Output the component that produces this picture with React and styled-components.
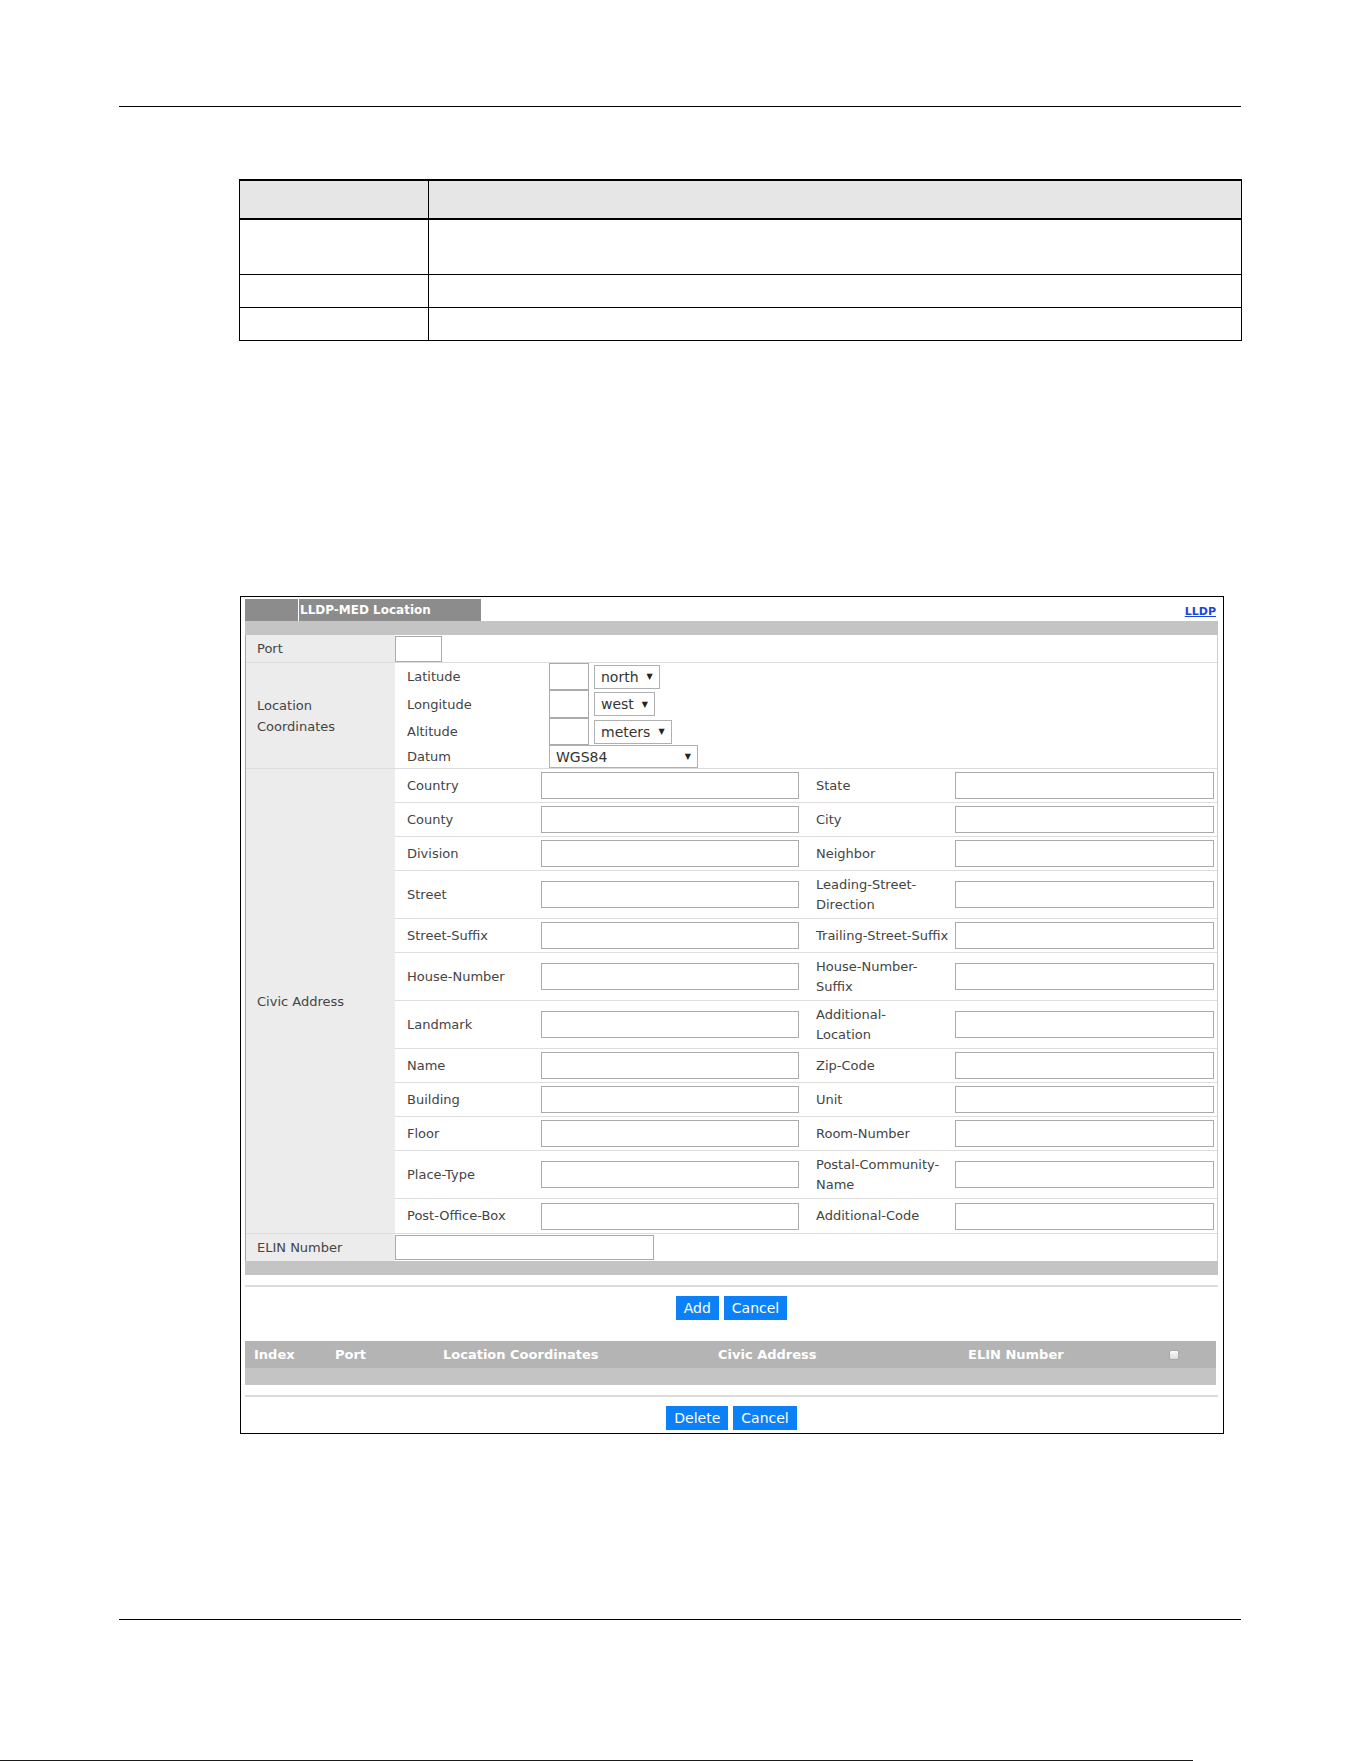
import React from 'react';
import styled, { createGlobalStyle } from 'styled-components';

const GlobalStyle = createGlobalStyle`
  html, body {
    margin: 0;
    padding: 0;
    background: #fff;
  }
  body {
    font-family: "DejaVu Sans", "Liberation Sans", sans-serif;
    color: #444;
  }
`;

const civicRows = [
  ['Country', 'State'],
  ['County', 'City'],
  ['Division', 'Neighbor'],
  ['Street', 'Leading-Street-\nDirection'],
  ['Street-Suffix', 'Trailing-Street-Suffix'],
  ['House-Number', 'House-Number-\nSuffix'],
  ['Landmark', 'Additional-\nLocation'],
  ['Name', 'Zip-Code'],
  ['Building', 'Unit'],
  ['Floor', 'Room-Number'],
  ['Place-Type', 'Postal-Community-\nName'],
  ['Post-Office-Box', 'Additional-Code'],
];

const coordRows = [
  { label: 'Latitude', unit: 'north' },
  { label: 'Longitude', unit: 'west' },
  { label: 'Altitude', unit: 'meters' },
];

const listColumns = ['Index', 'Port', 'Location Coordinates', 'Civic Address', 'ELIN Number'];

function App() {
  return (
    <Page>
      <GlobalStyle />
      <Rule $top={106} />

      <DocTable>
        <DocRow $head $h={37}><DocCell /><div /></DocRow>
        <DocRow $h={54}><DocCell /><div /></DocRow>
        <DocRow $h={32}><DocCell /><div /></DocRow>
        <DocRow $h={32} $last><DocCell /><div /></DocRow>
      </DocTable>

      <Frame>
        <TitleBar>
          <Tab>
            <TabEdge />
            <span>LLDP-MED Location</span>
          </Tab>
          <NavLink href="#">LLDP</NavLink>
        </TitleBar>
        <GrayBar />

        <Form>
          <Row $h={28}>
            <LabelCell>Port</LabelCell>
            <div>
              <TextBox readOnly $w={47} $h={26} style={{ marginTop: 1 }} />
            </div>
          </Row>

          <Row $h={106}>
            <LabelCell>Location<br />Coordinates</LabelCell>
            <CoordGrid>
              {coordRows.map(r => (
                <React.Fragment key={r.label}>
                  <SubLabel>{r.label}</SubLabel>
                  <TextBox readOnly $w={40} $h={r.label === 'Longitude' ? 28 : 27} />
                  <SelectCell>
                    <Select>
                      {r.unit}
                      <Arrow>▼</Arrow>
                    </Select>
                  </SelectCell>
                </React.Fragment>
              ))}
              <SubLabel>Datum</SubLabel>
              <DatumCell>
                <Select $w={149} $h={23}>
                  WGS84
                  <Arrow>▼</Arrow>
                </Select>
              </DatumCell>
            </CoordGrid>
          </Row>

          <Row>
            <LabelCell>Civic Address</LabelCell>
            <CivicList>
              {civicRows.map(([left, right]) => (
                <CivicLine key={left}>
                  <FieldLabel $indent={12}>{left}</FieldLabel>
                  <TextBox readOnly $h={27} />
                  <FieldLabel $indent={17}>{right}</FieldLabel>
                  <TextBox readOnly $h={27} />
                </CivicLine>
              ))}
            </CivicList>
          </Row>

          <Row $h={27} $flat>
            <LabelCell>ELIN Number</LabelCell>
            <div>
              <TextBox readOnly $w={259} $h={25} style={{ marginTop: 1 }} />
            </div>
          </Row>
        </Form>
        <GrayBar />

        <Divider />
        <ButtonRow>
          <Button>Add</Button>
          <Button>Cancel</Button>
        </ButtonRow>

        <ListTable>
          <ListHead>
            {listColumns.map(c => <HeadCell key={c}>{c}</HeadCell>)}
            <HeadCell><CheckBox /></HeadCell>
          </ListHead>
          <ListBody />
        </ListTable>

        <Divider />
        <ButtonRow>
          <Button>Delete</Button>
          <Button>Cancel</Button>
        </ButtonRow>
      </Frame>

      <Rule $top={185} />
      <PageEdge />
    </Page>
  );
}

export default App;

const Page = styled.div`
  width: 1361px;
  height: 1761px;
  display: flex;
  flex-direction: column;
  overflow: hidden;
`;

const Rule = styled.div`
  flex-shrink: 0;
  margin: ${p => p.$top}px 0 0 119px;
  width: 1122px;
  height: 1px;
  background: #000;
`;

const PageEdge = styled.div`
  flex-shrink: 0;
  margin-top: 140px;
  width: 1193px;
  height: 1px;
  background: #1a1a1a;
`;

/* empty description table at the top of the page */
const DocTable = styled.div`
  flex-shrink: 0;
  box-sizing: border-box;
  margin: 72px 0 0 239px;
  width: 1003px;
  border: 1px solid #000;
  border-top-width: 2px;
`;

const DocRow = styled.div`
  display: grid;
  grid-template-columns: 189px 1fr;
  height: ${p => p.$h}px;
  background: ${p => (p.$head ? '#e6e6e6' : '#fff')};
  border-bottom: ${p => (p.$last ? 'none' : `${p.$head ? 2 : 1}px solid #000`)};
`;

const DocCell = styled.div`
  border-right: 1px solid #000;
`;

/* the LLDP-MED Location screen */
const Frame = styled.div`
  flex-shrink: 0;
  box-sizing: border-box;
  margin: 255px 0 0 240px;
  width: 984px;
  height: 838px;
  padding: 2px 5px 0 4px;
  border: 1px solid #000;
  display: flex;
  flex-direction: column;
`;

const TitleBar = styled.div`
  display: flex;
  justify-content: space-between;
  height: 22px;
`;

const Tab = styled.div`
  display: flex;
  align-items: center;
  width: 236px;
  background: #8c8c8c;
  color: #fff;
  font-size: 12px;
  font-weight: 700;

  span {
    padding-left: 1px;
  }
`;

const TabEdge = styled.div`
  width: 53px;
  height: 100%;
  border-right: 1px solid #fff;
`;

const NavLink = styled.a`
  align-self: center;
  margin: 3px 2px 0 0;
  color: #1946d8;
  font-size: 11px;
  font-weight: 700;
  text-decoration: underline;
`;

const GrayBar = styled.div`
  height: 14px;
  background: #c4c4c4;
`;

const Form = styled.div`
  border-left: 1px solid #a4a4a4;
  border-right: 1px solid #cfcfcf;
`;

const Row = styled.div`
  box-sizing: border-box;
  display: grid;
  grid-template-columns: 149px 1fr;
  height: ${p => (p.$h ? `${p.$h}px` : 'auto')};
  border-bottom: ${p => (p.$flat ? 'none' : '1px solid #dcdcdc')};
`;

const LabelCell = styled.div`
  display: flex;
  align-items: center;
  padding-left: 11px;
  background: #ececec;
  font-size: 13px;
  line-height: 21px;
  color: #444;
`;

const TextBox = styled.input`
  display: block;
  box-sizing: border-box;
  width: ${p => (p.$w ? `${p.$w}px` : '100%')};
  height: ${p => p.$h}px;
  margin: 0;
  padding: 0;
  border: 1px solid #ababab;
  background: #fff;
  align-self: center;
  outline: none;
`;

const CoordGrid = styled.div`
  display: grid;
  grid-template-columns: 149px 40px auto;
  grid-template-rows: 27px 28px 27px 23px;
  column-gap: 5px;
`;

const SubLabel = styled.div`
  display: flex;
  align-items: center;
  padding-left: 12px;
  font-size: 13px;
  color: #444;
`;

const SelectCell = styled.div`
  display: flex;
  align-items: center;
`;

const DatumCell = styled.div`
  grid-column: 2 / 4;
  display: flex;
  align-items: center;
`;

const Select = styled.div`
  box-sizing: border-box;
  display: flex;
  align-items: center;
  justify-content: space-between;
  gap: 8px;
  width: ${p => (p.$w ? `${p.$w}px` : 'auto')};
  height: ${p => p.$h || 24}px;
  padding: 0 6px;
  border: 1px solid #b0b0b0;
  background: #fff;
  font-size: 14px;
  color: #333;
`;

const Arrow = styled.span`
  font-size: 8px;
  color: #222;
`;

const CivicList = styled.div`
  display: flex;
  flex-direction: column;
`;

const CivicLine = styled.div`
  box-sizing: border-box;
  display: grid;
  grid-template-columns: 146px 258px 156px 259px;
  min-height: 34px;
  border-bottom: 1px solid #dedede;

  &:last-child {
    border-bottom: none;
  }
`;

const FieldLabel = styled.div`
  display: flex;
  align-items: center;
  padding: 4px 0 4px ${p => p.$indent}px;
  font-size: 13px;
  line-height: 19.5px;
  white-space: pre;
  color: #444;
`;

const Divider = styled.div`
  margin-top: 10px;
  height: 2px;
  background: #dcdcdc;
`;

const ButtonRow = styled.div`
  display: flex;
  justify-content: center;
  gap: 5px;
  margin-top: 9px;
`;

const Button = styled.button`
  height: 24px;
  padding: 0 8px;
  border: none;
  background: #0b80f7;
  color: #fff;
  font-family: "DejaVu Sans", "Liberation Sans", sans-serif;
  font-size: 14px;
  line-height: 24px;
`;

const ListTable = styled.div`
  margin: 21px 2px 0 0;
`;

const ListHead = styled.div`
  display: grid;
  grid-template-columns: 81px 108px 275px 250px 201px 1fr;
  align-items: center;
  height: 27px;
  background: #b4b4b4;
  color: #fff;
  font-size: 13px;
  font-weight: 700;
`;

const HeadCell = styled.div`
  display: flex;
  align-items: center;
  padding-left: 9px;
`;

const CheckBox = styled.span`
  display: block;
  box-sizing: border-box;
  width: 10px;
  height: 10px;
  border: 1px solid #a8a8a8;
  border-radius: 2px;
  background: linear-gradient(#fafafa, #dcdcdc);
`;

const ListBody = styled.div`
  height: 17px;
  background: #c4c4c4;
`;
